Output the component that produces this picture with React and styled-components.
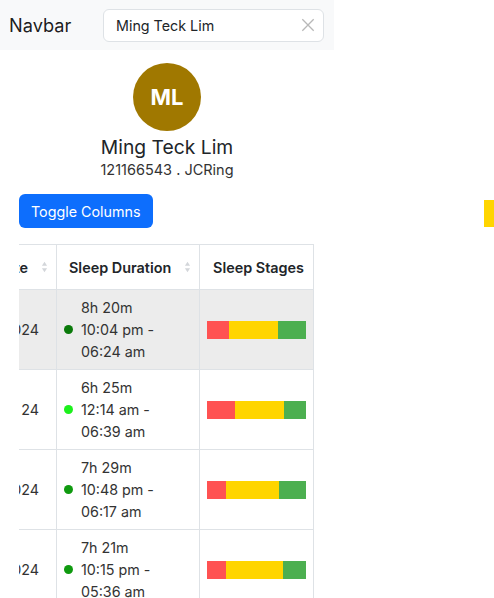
import React from 'react'
import styled, { createGlobalStyle } from 'styled-components'

const GlobalStyle = createGlobalStyle`
  body {
    margin: 0;
    font-family: Inter, "Liberation Sans", sans-serif;
    color: #212529;
    background: #fff;
  }
`

const rows = [
  { date: 'Dec 01, 2024', dur: '8h 20m', from: '10:04 pm', to: '06:24 am', dot: '#0a7a0a', stages: [22, 49, 28], hover: true },
  { date: 'Nov 30, 24', dur: '6h 25m', from: '12:14 am', to: '06:39 am', dot: '#1cf01c', stages: [28, 49, 22] },
  { date: 'Nov 29, 2024', dur: '7h 29m', from: '10:48 pm', to: '06:17 am', dot: '#0f9a0f', stages: [19, 53, 27] },
  { date: 'Nov 28, 2024', dur: '7h 21m', from: '10:15 pm', to: '05:36 am', dot: '#0f9a0f', stages: [19, 57, 23] },
]

const stageColors = ['#ff5252', '#ffd500', '#4caf50']
const colWidths = [73, 143, 114]

export default function App() {
  return (
    <>
      <GlobalStyle />
      <Navbar>
        <Brand>Navbar</Brand>
        <Search>
          <SearchText>Ming Teck Lim</SearchText>
          <ClearIcon viewBox="0 0 16 16">
            <path d="M1.5 1.5 L14.5 14.5 M14.5 1.5 L1.5 14.5" />
          </ClearIcon>
        </Search>
      </Navbar>

      <Profile>
        <Avatar>ML</Avatar>
        <Name>Ming Teck Lim</Name>
        <Sub>121166543 . JCRing</Sub>
      </Profile>

      <Toolbar>
        <Button>Toggle Columns</Button>
        <Marker />
      </Toolbar>

      <TableClip>
        <Table $w={colWidths.reduce((a, b) => a + b, 0)}>
          <colgroup>
            {colWidths.map((w, i) => <col key={i} style={{ width: w }} />)}
          </colgroup>
          <thead>
            <tr>
              <Th>Date<SortIcon /></Th>
              <Th>Sleep Duration<SortIcon /></Th>
              <Th $center>Sleep Stages</Th>
            </tr>
          </thead>
          <tbody>
            {rows.map((r, i) => (
              <Tr key={i} $hover={r.hover}>
                <DateCell><DateText>{r.date}</DateText></DateCell>
                <DurCell>
                  <Duration>
                    <Dot $color={r.dot} />
                    <div>
                      {r.dur}<br />{r.from} -<br />{r.to}
                    </div>
                  </Duration>
                </DurCell>
                <StageCell>
                  <Bar>
                    {r.stages.map((w, j) => (
                      <Segment key={j} $color={stageColors[j]} style={{ width: w }} />
                    ))}
                  </Bar>
                </StageCell>
              </Tr>
            ))}
          </tbody>
        </Table>
      </TableClip>
    </>
  )
}

function SortIcon() {
  return (
    <Sort viewBox="0 0 8 14">
      <path d="M4 1 L7 5.5 H1 Z M4 13 L7 8.5 H1 Z" />
    </Sort>
  )
}

const Navbar = styled.nav`
  width: 334px;
  height: 50px;
  box-sizing: border-box;
  background: #f8f9fa;
  display: flex;
  align-items: center;
  padding: 0 10px 0 9px;
`

const Brand = styled.div`
  font-size: 18.2px;
  color: rgba(0, 0, 0, 0.9);
`

const Search = styled.div`
  margin-left: auto;
  width: 221px;
  height: 33px;
  box-sizing: border-box;
  background: #fff;
  border: 1px solid #dee2e6;
  border-radius: 6px;
  display: flex;
  align-items: center;
  padding: 0 8px 0 12px;
`

const SearchText = styled.span`
  font-size: 14.3px;
  color: #212529;
  flex: 1;
`

const ClearIcon = styled.svg`
  width: 14px;
  height: 14px;
  stroke: #b8b8b8;
  stroke-width: 1.5;
  fill: none;
`

const Profile = styled.section`
  width: 334px;
  display: flex;
  flex-direction: column;
  align-items: center;
  padding-top: 13px;
`

const Avatar = styled.div`
  width: 68px;
  height: 68px;
  border-radius: 50%;
  background: #a07800;
  color: #fff;
  font-weight: 700;
  font-size: 22px;
  display: flex;
  align-items: center;
  justify-content: center;
`

const Name = styled.div`
  font-size: 19.3px;
  margin-top: 3px;
  line-height: 26px;
`

const Sub = styled.div`
  font-size: 14.5px;
  color: #333;
  line-height: 20px;
`

const Toolbar = styled.div`
  display: flex;
  align-items: center;
  padding-left: 19px;
  margin-top: 14px;
`

const Button = styled.button`
  height: 34px;
  padding: 0 12px;
  border: none;
  border-radius: 6px;
  background: #0d6efd;
  color: #fff;
  font-family: inherit;
  font-size: 14.3px;
`

const Marker = styled.div`
  margin-left: auto;
  margin-top: 4px;
  width: 10px;
  height: 27px;
  background: #ffd500;
`

const TableClip = styled.div`
  margin: 16px 0 0 19px;
  width: 300px;
  overflow: hidden;
`

const Table = styled.table`
  width: ${p => p.$w}px;
  border-collapse: collapse;
  margin-left: -36px;
  table-layout: fixed;
  font-size: 14.3px;
`

const Th = styled.th`
  height: 45px;
  box-sizing: border-box;
  border: 1px solid #dee2e6;
  padding: 0 8px 0 12px;
  text-align: ${p => (p.$center ? 'center' : 'left')};
  font-weight: 600;
  font-size: 14.4px;
  white-space: nowrap;
  position: relative;
`

const Sort = styled.svg`
  width: 7px;
  height: 12px;
  fill: #d3d6da;
  position: absolute;
  right: 8px;
  top: 16px;
`

const Tr = styled.tr`
  background: ${p => (p.$hover ? '#ececec' : '#fff')};
`

const Td = styled.td`
  height: 80px;
  box-sizing: border-box;
  border: 1px solid #dee2e6;
  vertical-align: middle;
  color: #333;
`

const DateCell = styled(Td)`
  padding: 0 17px 0 0;
  overflow: hidden;
`

const DateText = styled.div`
  display: flex;
  justify-content: flex-end;
  white-space: nowrap;
`

const DurCell = styled(Td)`
  padding: 0 7px;
`

const Duration = styled.div`
  display: flex;
  align-items: center;
  gap: 8px;
  line-height: 22px;
`

const Dot = styled.span`
  width: 9px;
  height: 9px;
  border-radius: 50%;
  background: ${p => p.$color};
  flex-shrink: 0;
`

const StageCell = styled(Td)`
  padding: 0 7px;
`

const Bar = styled.div`
  display: flex;
  height: 18px;
  width: 99px;
`

const Segment = styled.div`
  height: 100%;
  background: ${p => p.$color};
`
